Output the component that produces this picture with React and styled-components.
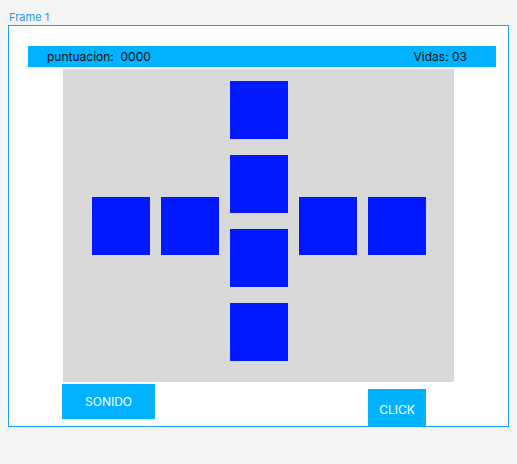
import React from "react";
import styled, { createGlobalStyle } from "styled-components";

const GlobalStyle = createGlobalStyle`
  html, body {
    margin: 0;
    padding: 0;
    background: #f4f4f4;
    font-family: Inter, "Noto Sans", sans-serif;
  }
`;

const Page = styled.div`
  padding: 10px 0 0 8px;
`;

const FrameLabel = styled.div`
  height: 15px;
  padding-left: 1px;
  font-size: 11px;
  line-height: 14px;
  color: #1e96f5;
`;

const Frame = styled.div`
  width: 499px;
  height: 400px;
  border: 1px solid #18a0fb;
  background: #ffffff;
  overflow: hidden;
`;

const ScoreBar = styled.div`
  display: flex;
  justify-content: space-between;
  align-items: center;
  box-sizing: border-box;
  width: 468px;
  height: 21px;
  margin: 20px 0 0 19px;
  padding: 0 29px 0 19px;
  background: #00b2ff;
  color: #111;
  font-size: 12px;
  white-space: pre;
`;

const Board = styled.div`
  display: flex;
  align-items: flex-start;
  gap: 11px;
  box-sizing: border-box;
  width: 391px;
  height: 313px;
  margin: 2px 0 0 54px;
  padding: 12px 0 0 29px;
  background: #d9d9d9;
`;

const Column = styled.div`
  display: flex;
  flex-direction: column;
  gap: 16px;
`;

const Tile = styled.div`
  width: 58px;
  height: 58px;
  flex: none;
  background: #0019ff;
  margin-top: ${(p) => (p.$offset ? `${p.$offset}px` : "0")};
`;

const Controls = styled.div`
  display: flex;
  align-items: flex-start;
`;

const Button = styled.button`
  border: none;
  padding: 0;
  background: #00b2ff;
  color: #ffffff;
  font-family: Inter, "Noto Sans", sans-serif;
  font-size: 12px;
  width: ${(p) => p.$w}px;
  height: ${(p) => p.$h}px;
  margin-left: ${(p) => p.$left}px;
  margin-top: ${(p) => p.$top}px;
`;

export default function App() {
  return (
    <>
      <GlobalStyle />
      <Page>
        <FrameLabel>Frame 1</FrameLabel>
        <Frame>
          <ScoreBar>
            <span>puntuacion:  0000</span>
            <span>Vidas: 03</span>
          </ScoreBar>
          <Board>
            <Tile $offset={116} />
            <Tile $offset={116} />
            <Column>
              <Tile />
              <Tile />
              <Tile />
              <Tile />
            </Column>
            <Tile $offset={116} />
            <Tile $offset={116} />
          </Board>
          <Controls>
            <Button $w={93} $h={35} $left={53} $top={2}>SONIDO</Button>
            <Button $w={58} $h={40} $left={213} $top={7}>CLICK</Button>
          </Controls>
        </Frame>
      </Page>
    </>
  );
}
